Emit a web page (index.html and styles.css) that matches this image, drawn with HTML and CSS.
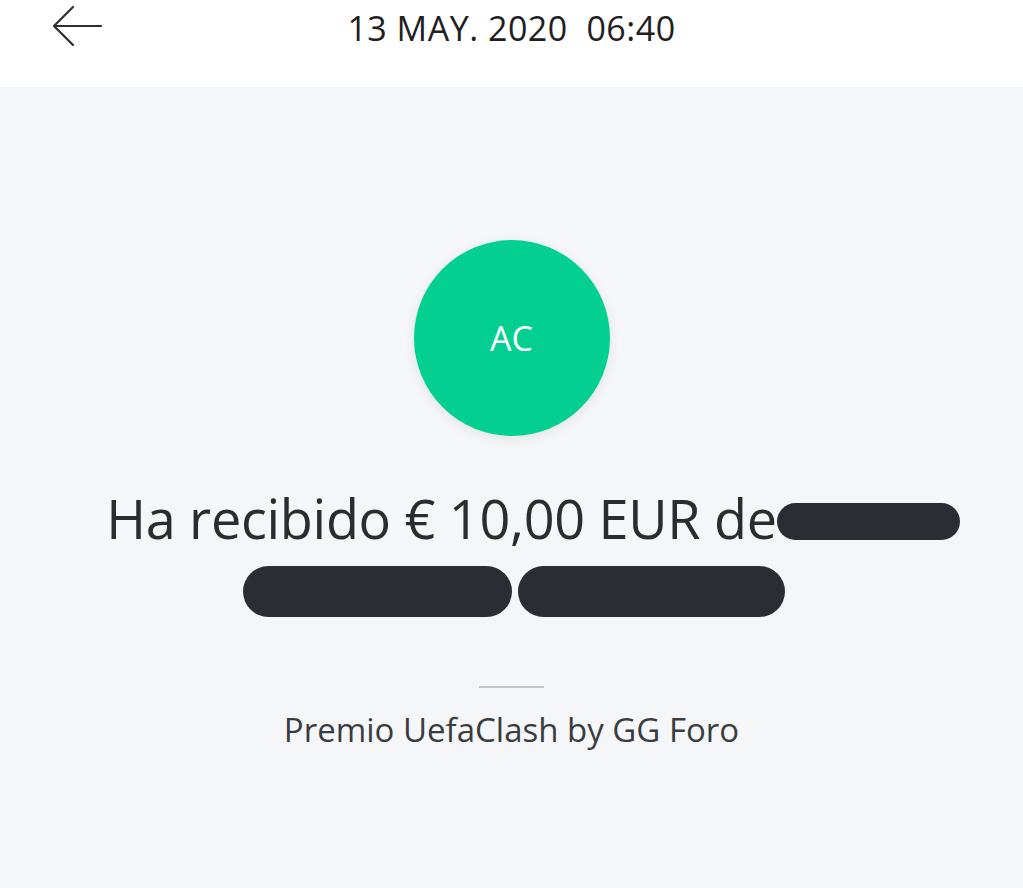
FILE: index.html
```html
<!DOCTYPE html>
<html lang="es">
<head>
<meta charset="utf-8">
<link rel="stylesheet" href="styles.css">
<title>Detalle</title>
</head>
<body>
<header class="topbar">
  <button class="back" aria-label="Atrás">
    <svg width="52" height="44" viewBox="0 0 52 44"><path d="M50 22H3M22 3L3 22l19 19" fill="none" stroke="#2c2e2f" stroke-width="2.2" stroke-linecap="round" stroke-linejoin="round"/></svg>
  </button>
  <div class="date">13 MAY. 2020&nbsp; 06:40</div>
</header>
<main class="content">
  <div class="avatar">AC</div>
  <h1 class="title">
    <span class="line1">Ha recibido € 10,00 EUR de<span class="redact r1"></span></span>
    <span class="line2"><span class="redact r2"></span><span class="redact r3"></span></span>
  </h1>
  <div class="divider"></div>
  <p class="note">Premio UefaClash by GG Foro</p>
</main>
</body>
</html>
```
FILE: styles.css
```css
html, body { margin: 0; padding: 0; }
body {
  font-family: "Open Sans", "Noto Sans", sans-serif;
  background: #f5f6f8;
  color: #2c2e2f;
  width: 1023px;
  height: 888px;
  overflow: hidden;
}
.topbar {
  height: 87px;
  background: #ffffff;
  display: flex;
  align-items: flex-start;
  position: relative;
}
.back {
  border: 0;
  background: none;
  padding: 0;
  margin: 4px 0 0 51px;
  width: 52px;
  height: 44px;
  display: block;
}
.back svg { display: block; }
.date {
  position: absolute;
  left: 0; right: 0; top: 5px;
  text-align: center;
  font-size: 34px;
  letter-spacing: 0.5px;
  color: #1f2022;
  pointer-events: none;
}
.content {
  display: flex;
  flex-direction: column;
  align-items: center;
  padding-top: 153px;
}
.avatar {
  width: 196px;
  height: 196px;
  border-radius: 50%;
  background: #03cf91;
  color: #ffffff;
  display: flex;
  align-items: center;
  justify-content: center;
  font-size: 34px;
  box-shadow: 0 3px 12px rgba(0,0,0,0.08);
}
.title {
  margin: 50px 0 0;
  font-weight: 400;
  font-size: 54px;
  letter-spacing: -0.3px;
  line-height: 64px;
  color: #2a2c2f;
  display: flex;
  flex-direction: column;
  align-items: center;
}
.line1 { display: flex; align-items: center; padding-left: 43px; }
.line2 { display: flex; gap: 6px; margin-top: 16px; padding-left: 5px; }
.redact { display: inline-block; background: #2a2d31; border-radius: 999px; }
.r1 { width: 183px; height: 37px; margin-left: 0; margin-top: 6px; }
.r2 { width: 269px; height: 51px; }
.r3 { width: 267px; height: 51px; }
.divider {
  width: 65px;
  height: 2px;
  background: #c2c6ca;
  margin-top: 69px;
}
.note {
  margin: 19px 0 0;
  font-size: 33px;
  color: #3a3d40;
}
```
